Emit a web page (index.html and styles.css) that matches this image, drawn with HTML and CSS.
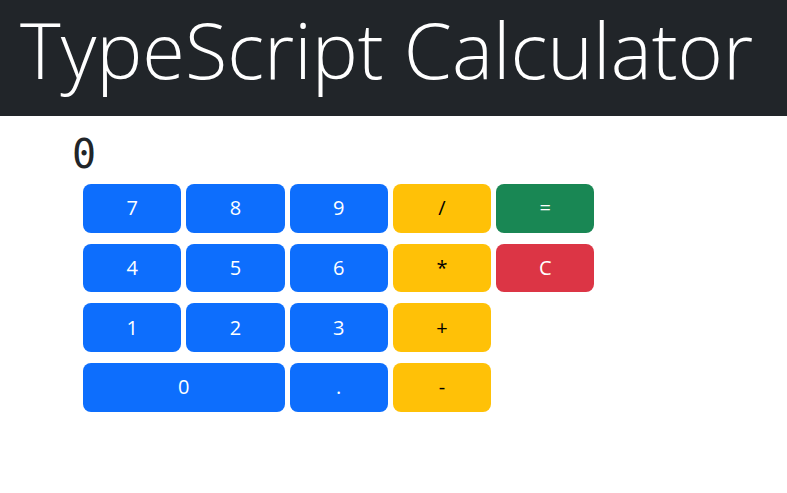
FILE: index.html
```html
<!DOCTYPE html>
<html lang="en">
<head>
<meta charset="utf-8">
<title>TypeScript Calculator</title>
<link rel="stylesheet" href="styles.css">
</head>
<body>
<header class="topbar">
  <h1 class="title">TypeScript Calculator</h1>
</header>
<main class="calc">
  <div class="display">0</div>
  <div class="keys">
    <button class="key num">7</button>
    <button class="key num">8</button>
    <button class="key num">9</button>
    <button class="key op">/</button>
    <button class="key eq">=</button>
    <button class="key num">4</button>
    <button class="key num">5</button>
    <button class="key num">6</button>
    <button class="key op">*</button>
    <button class="key clr">C</button>
    <button class="key num">1</button>
    <button class="key num">2</button>
    <button class="key num">3</button>
    <button class="key op">+</button>
    <span class="blank"></span>
    <button class="key num wide">0</button>
    <button class="key num">.</button>
    <button class="key op">-</button>
  </div>
</main>
</body>
</html>
```
FILE: styles.css
```css
* { box-sizing: border-box; }
html, body { margin: 0; padding: 0; background: #fff; }
body { font-family: "Open Sans", "Noto Sans", sans-serif; color: #212529; }

.topbar {
  background: #212529;
  height: 116px;
  padding: 3px 20px 0;
}
.title {
  margin: 0;
  font-family: "Open Sans", sans-serif;
  font-weight: 300;
  font-size: 77.5px;
  line-height: 1.2;
  color: #fff;
  white-space: nowrap;
}

.calc {
  padding: 14px 0 0 72px;
}
.display {
  font-family: "DejaVu Sans Mono", monospace;
  font-size: 40px;
  line-height: 48px;
  color: #212529;
  height: 54px;
}
.keys {
  margin-left: 11px;
  display: grid;
  grid-template-columns: repeat(5, 98.3px);
  grid-auto-rows: 48.7px;
  column-gap: 5px;
  row-gap: 11px;
}
.key {
  border: 0;
  border-radius: 8px;
  font-family: "Open Sans", sans-serif;
  font-size: 20px;
  line-height: 1.5;
  padding: 0;
  color: #fff;
}
.num { background: #0d6efd; }
.op { background: #ffc107; color: #000; }
.eq { background: #198754; }
.clr { background: #dc3545; }
.wide { grid-column: span 2; }
```
